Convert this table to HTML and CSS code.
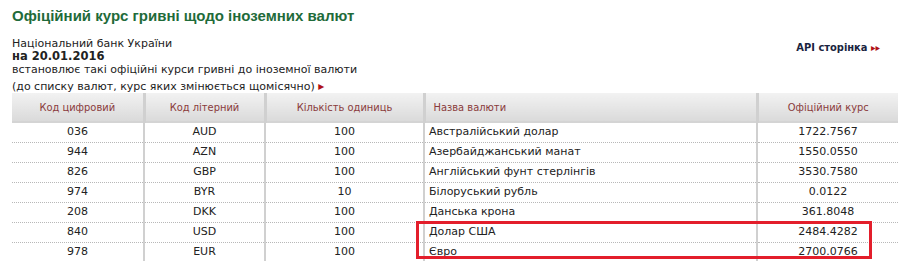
FILE: index.html
```html
<!DOCTYPE html>
<html lang="uk">
<head>
<meta charset="utf-8">
<link rel="stylesheet" href="styles.css">
</head>
<body>
<div class="page">
  <h1 class="title">Офіційний курс гривні щодо іноземних валют</h1>
  <div class="intro">
    <div class="intro-text">
      <div>Національний банк України</div>
      <div class="date">на 20.01.2016</div>
      <div>встановлює такі офіційні курси гривні до іноземної валюти</div>
    </div>
    <a class="api">API сторінка <span class="arr">&#9656;&#9656;</span></a>
  </div>
  <div class="note">(до списку валют, курс яких змінюється щомісячно) <span class="arr">&#9656;</span></div>
  <div class="table-wrap">
    <table class="rates">
      <colgroup>
        <col class="c1"><col class="c2"><col class="c3"><col class="c4"><col class="c5">
      </colgroup>
      <thead>
        <tr><th>Код цифровий</th><th>Код літерний</th><th>Кількість одиниць</th><th class="left">Назва валюти</th><th>Офіційний курс</th></tr>
      </thead>
      <tbody>
        <tr><td>036</td><td>AUD</td><td>100</td><td class="left">Австралійський долар</td><td>1722.7567</td></tr>
        <tr><td>944</td><td>AZN</td><td>100</td><td class="left">Азербайджанський манат</td><td>1550.0550</td></tr>
        <tr><td>826</td><td>GBP</td><td>100</td><td class="left">Англійський фунт стерлінгів</td><td>3530.7580</td></tr>
        <tr><td>974</td><td>BYR</td><td>10</td><td class="left">Білоруський рубль</td><td>0.0122</td></tr>
        <tr><td>208</td><td>DKK</td><td>100</td><td class="left">Данська крона</td><td>361.8048</td></tr>
        <tr><td>840</td><td>USD</td><td>100</td><td class="left">Долар США</td><td>2484.4282</td></tr>
        <tr><td>978</td><td>EUR</td><td>100</td><td class="left">Євро</td><td>2700.0766</td></tr>
      </tbody>
    </table>
    <div class="highlight"></div>
  </div>
</div>
</body>
</html>
```
FILE: styles.css
```css
html, body { margin: 0; padding: 0; background: #fff; }
body { font-family: "DejaVu Sans", Verdana, sans-serif; font-size: 11px; color: #222; }
.page { padding: 0 4px 0 12px; }
.title {
  margin: 0; padding-top: 7px; height: 37px; box-sizing: border-box;
  font-family: "Liberation Sans", Arial, sans-serif; font-weight: bold;
  font-size: 15px; line-height: 18px; color: #1f6b3a;
}
.intro { display: flex; justify-content: space-between; align-items: flex-start; }
.intro-text { line-height: 13px; }
.date { font-weight: bold; font-size: 11.5px; }
.api {
  font-family: "DejaVu Sans Condensed", Tahoma, sans-serif;
  font-weight: bold; color: #1a2440; margin-top: 4px; margin-right: 18px; text-decoration: none;
}
.arr { color: #b01018; font-size: 10px; }
.note { margin-top: 2px; line-height: 16px; height: 15px; }
.note .arr { font-size: 12px; }
.table-wrap { position: relative; }
.rates { width: 886px; border-collapse: collapse; table-layout: fixed; }
.c1 { width: 132px; } .c2 { width: 121px; } .c3 { width: 159px; } .c4 { width: 333px; } .c5 { width: 141px; }
.rates th {
  height: 29px; padding: 0; box-sizing: border-box;
  font-family: "DejaVu Sans Condensed", Tahoma, sans-serif; font-weight: normal; font-size: 11px;
  color: #8a3b3b; text-align: center;
  background: linear-gradient(#f2f2f2, #dadada);
  border-left: 3px solid #d0d0d0; border-bottom: 2px solid #d4d4d4;
}
.rates th:first-child { border-left: none; }
.rates th.left { text-align: left; padding-left: 8px; }
.rates td {
  height: 20px; padding: 0; text-align: center; line-height: 18px;
  border-left: 2px solid #d0d0d0; border-bottom: 1px dotted #b8b8b8;
  box-sizing: border-box;
}
.rates td:first-child { border-left: none; }
.rates td.left { text-align: left; padding-left: 4px; }
.rates tr:last-child td { border-bottom: none; }
.highlight {
  position: absolute; left: 404px; top: 128px; width: 456px; height: 38px;
  border: 3px solid #e31e2b; box-sizing: border-box;
}
```
